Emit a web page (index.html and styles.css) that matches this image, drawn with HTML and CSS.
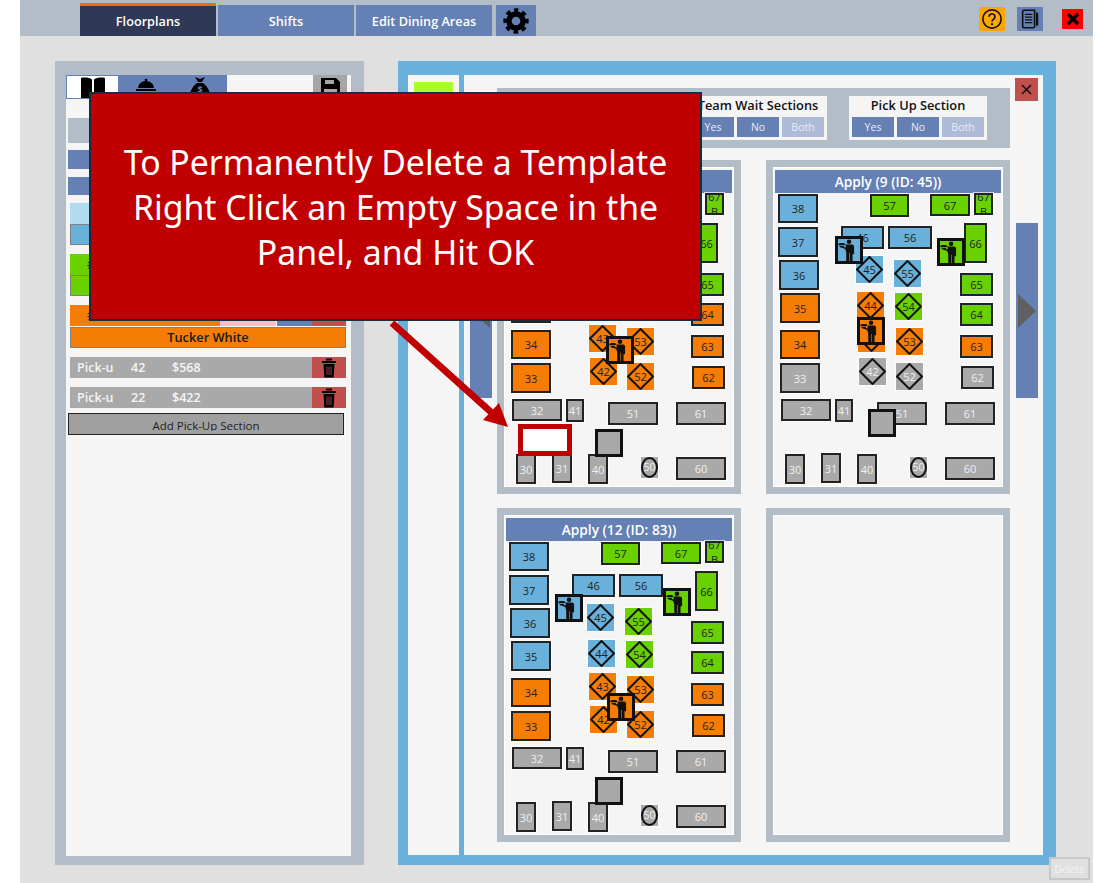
FILE: index.html
```html
<!DOCTYPE html>
<html lang="en">
<head>
    <meta charset="UTF-8">
    <meta name="viewport" content="width=device-width, initial-scale=1.0">
    <title>Floorplans</title>
    <link rel="stylesheet" href="styles.css">
</head>
<body>
    <div class="app">
        <header class="topbar">
            <button class="tab tab-active">Floorplans</button>
            <button class="tab">Shifts</button>
            <button class="tab">Edit Dining Areas</button>
            <button class="tab tab-gear">
                <svg width="26" height="26" viewBox="0 0 24 24">
                    <circle cx="12" cy="12" r="10" fill="none" stroke="#000" stroke-width="3.400" stroke-dasharray="4.200 3.654" stroke-dashoffset="2.100" transform="rotate(-90 12 12)"/>
                    <circle cx="12" cy="12" r="6.500" fill="none" stroke="#000" stroke-width="5"/>
                </svg>
            </button>
            <div class="top-actions">
                <button class="top-btn top-help">
                    <svg width="22" height="22" viewBox="0 0 24 24">
                        <circle cx="12" cy="12" r="10" fill="none" stroke="#111" stroke-width="1.800"/>
                        <path d="M8.800 9.500a3.200 3.200 0 1 1 4.900 2.700c-1.100.7-1.700 1.300-1.700 2.600" fill="none" stroke="#111" stroke-width="1.800"/>
                        <circle cx="12" cy="17.600" r="1.200" fill="#111"/>
                    </svg>
                </button>
                <button class="top-btn top-notes">
                    <svg width="22" height="22" viewBox="0 0 24 24">
                        <path d="M4 4q0-1.500 1.500-1.500H17V20q0 1.500-1.500 1.500h-10Q4 21.500 4 20z" fill="none" stroke="#111" stroke-width="1.800"/>
                        <path d="M6.500 7h8M6.500 10h8M6.500 13h8M6.500 16h8" stroke="#111" stroke-width="1.300"/>
                        <path d="M18.500 5h2l.5 1.500V18l-1.500 2.500-1-2.500z" fill="#111"/>
                    </svg>
                </button>
                <button class="top-btn top-close">
                    <svg width="14" height="14" viewBox="0 0 14 14">
                        <path d="M2 2l10 10M12 2L2 12" stroke="#000" stroke-width="3.200"/>
                    </svg>
                </button>
            </div>
        </header>

        <main class="content">
            <section class="side">
                <div class="side-inner">
                    <div class="side-tabs">
                        <button class="side-tab side-tab-on">
                            <svg width="26" height="26" viewBox="0 0 26 26">
                                <path d="M1 1c4-1 8-.5 11 1.500v22C9 23 5 23 1 24zM25 1c-4-1-8-.5-11 1.500v22c3-1.500 7-1.500 11-1z" fill="#000"/>
                            </svg>
                        </button>
                        <button class="side-tab side-tab-blue">
                            <svg width="26" height="26" viewBox="0 0 26 26">
                                <circle cx="13" cy="4" r="1.300" fill="#000"/>
                                <path d="M5 12a8 7 0 0 1 16 0zM3 13h20v2H3z" fill="#000"/>
                            </svg>
                        </button>
                        <button class="side-tab side-tab-blue">
                            <svg width="26" height="26" viewBox="0 0 26 26">
                                <path d="M8 1l5 2 5-2-3 5h-4zM10 7h6c4 3 7 8 7 12 0 3-3 5-10 5S3 22 3 19c0-4 3-9 7-12z" fill="#000"/>
                                <text x="13" y="17" class="bag-sign">$</text>
                            </svg>
                        </button>
                        <span class="side-tab-gap"></span>
                        <button class="side-tab side-tab-save">
                            <svg width="22" height="26" viewBox="0 0 22 26">
                                <path d="M2 2h15l4 4v18H2z" fill="#000"/>
                                <path d="M6 4h9v4H6zM5 13h13v9H5z" fill="#a6a6a6"/>
                            </svg>
                        </button>
                    </div>

                    <div class="bar bar-grey"></div>
                    <div class="bar bar-blue"></div>
                    <div class="bar bar-blue bar-short"></div>

                    <div class="bar bar-sky"></div>
                    <div class="bar bar-sky-name"></div>

                    <div class="bar bar-green">#</div>
                    <div class="bar bar-green-name"></div>

                    <div class="section-row">
                        <span class="section-fill">#</span>
                        <span class="section-pink"></span>
                        <span class="section-blue"></span>
                        <span class="section-del"></span>
                    </div>
                    <div class="section-name">Tucker White</div>

                    <div class="pick-row">
                        <span class="pick-name">Pick-u</span>
                        <span class="pick-num">42</span>
                        <span class="pick-amt">$568</span>
                        <span class="pick-del">
                            <svg width="16" height="20" viewBox="0 0 16 20">
                                <path d="M5 1.500h6M1 4h14" stroke="#000" stroke-width="2.200" fill="none"/>
                                <path d="M2.500 6h11l-.8 13.500H3.300z" fill="#000"/>
                                <path d="M6 8.500v8.500M8 8.500v8.500M10 8.500v8.500" stroke="#b9504a" stroke-width=".8"/>
                            </svg>
                        </span>
                    </div>
                    <div class="pick-row">
                        <span class="pick-name">Pick-u</span>
                        <span class="pick-num">22</span>
                        <span class="pick-amt">$422</span>
                        <span class="pick-del">
                            <svg width="16" height="20" viewBox="0 0 16 20">
                                <path d="M5 1.500h6M1 4h14" stroke="#000" stroke-width="2.200" fill="none"/>
                                <path d="M2.500 6h11l-.8 13.500H3.300z" fill="#000"/>
                                <path d="M6 8.500v8.500M8 8.500v8.500M10 8.500v8.500" stroke="#b9504a" stroke-width=".8"/>
                            </svg>
                        </span>
                    </div>
                    <button class="add-pick"><span class="add-label">Add Pick-Up Section</span></button>
                </div>
            </section>

            <section class="board">
                <div class="board-strip"><span class="strip-swatch"></span></div>
                <div class="board-main">
                    <div class="side-col">
                        <button class="page-btn page-prev"><span class="tri tri-left"></span></button>
                    </div>
                    <div class="center-col">
                        <div class="filters">
                            <div class="filter">
                                <div class="filter-title">Team Wait Sections</div>
                                <div class="filter-btns">
                                    <button class="fbtn">Yes</button>
                                    <button class="fbtn">No</button>
                                    <button class="fbtn fbtn-off">Both</button>
                                </div>
                            </div>
                            <div class="filter">
                                <div class="filter-title">Pick Up Section</div>
                                <div class="filter-btns">
                                    <button class="fbtn">Yes</button>
                                    <button class="fbtn">No</button>
                                    <button class="fbtn fbtn-off">Both</button>
                                </div>
                            </div>
                        </div>
                        <div class="templates">
                            <div class="card"><div class="map" id="map1"></div></div>
                            <div class="card"><div class="map" id="map2"></div></div>
                            <div class="card"><div class="map" id="map3"></div></div>
                            <div class="card"><div class="map"></div></div>
                        </div>
                    </div>
                    <div class="side-col">
                        <button class="board-close">
                            <svg width="11" height="11" viewBox="0 0 11 11">
                                <path d="M1 1l9 9M10 1l-9 9" stroke="#111" stroke-width="1.500"/>
                            </svg>
                        </button>
                        <button class="page-btn page-next"><span class="tri tri-right"></span></button>
                    </div>
                </div>
            </section>
        </main>

        <button class="delete-btn">Delete</button>

        <!-- tutorial overlay -->
        <div class="callout">To Permanently Delete a Template<br>Right Click an Empty Space in the<br>Panel, and Hit OK</div>
        <svg class="callout-arrow" width="140" height="120" viewBox="0 0 140 120">
            <path d="M3 3L103 93" stroke="#c00000" stroke-width="7"/>
            <path d="M119 107L110 83 94 100z" fill="#c00000"/>
        </svg>
        <div class="callout-mark"></div>
    </div>
    <script src="script.js"></script>
</body>
</html>
```

FILE: styles.css
```css
* {
    box-sizing: border-box;
}

body {
    margin: 0;
    background-color: #fff;
    font-family: "Open Sans", "Liberation Sans", sans-serif;
}

button {
    font-family: inherit;
    border: none;
    padding: 0;
}

.app {
    position: relative;
    width: 1073px;
    height: 883px;
    margin-left: 20px;
    background-color: #e0e0e0;
    overflow: hidden;
}

/* top bar */
.topbar {
    display: flex;
    align-items: flex-end;
    height: 36px;
    padding-left: 60px;
    background-color: #b3bdc8;
}

.tab {
    width: 136px;
    height: 31px;
    margin-right: 2px;
    background-color: #6480b4;
    color: #fff;
    font-size: 12.700px;
    font-weight: 600;
}

.tab-active {
    height: 33px;
    background-color: #2f3854;
    border-top: 3px solid #f06a10;
}

.tab-gear {
    display: flex;
    align-items: center;
    justify-content: center;
    width: 40px;
    margin-left: 2px;
}

.top-actions {
    display: flex;
    align-items: center;
    align-self: stretch;
    margin-left: auto;
    padding-right: 10px;
    padding-top: 2px;
}

.top-btn {
    display: flex;
    align-items: center;
    justify-content: center;
    width: 26px;
    height: 24px;
}

.top-help {
    background-color: #ffa500;
}

.top-notes {
    margin-left: 12px;
    background-color: #6480b4;
}

.top-close {
    width: 21px;
    height: 20px;
    margin-left: 19px;
    background-color: #f00;
}

.content {
    display: flex;
    align-items: flex-start;
    padding: 25px 0 0 35px;
}

/* left panel */
.side {
    width: 309px;
    height: 804px;
    border: solid #b3bdc8;
    border-width: 14px 13px 9px 11px;
}

.side-inner {
    height: 100%;
    background-color: #f5f5f5;
    overflow: hidden;
}

.side-tabs {
    display: flex;
    height: 24px;
}

.side-tab {
    display: flex;
    align-items: flex-start;
    justify-content: center;
    width: 53px;
    height: 24px;
    padding-top: 1px;
    overflow: hidden;
}

.side-tab-on {
    background-color: #fff;
    border: 1px solid #6480b4;
}

.side-tab-blue {
    background-color: #6480b4;
    width: 54px;
}

.side-tab-gap {
    width: 86px;
}

.side-tab-save {
    width: 34px;
    background-color: #a6a6a6;
}

.bag-sign {
    fill: #6480b4;
    font-size: 9px;
    font-weight: 700;
    text-anchor: middle;
}

.bar {
    margin-left: 2px;
    width: 278px;
}

.bar-grey {
    height: 25px;
    margin-top: 19px;
    background-color: #b3bdc8;
}

.bar-blue {
    height: 19px;
    margin-top: 7px;
    background-color: #6480b4;
}

.bar-short {
    height: 18px;
    margin-top: 8px;
}

.bar-sky {
    height: 21px;
    margin-top: 8px;
    margin-left: 4px;
    width: 276px;
    background-color: #b3dbee;
}

.bar-sky-name {
    height: 21px;
    margin-left: 4px;
    width: 276px;
    background-color: #69b1da;
    border: 1px solid #808080;
}

.bar-green {
    height: 21px;
    margin-top: 9px;
    margin-left: 4px;
    padding-left: 17px;
    width: 276px;
    background-color: #69d100;
    color: #222;
    font-size: 12px;
    line-height: 21px;
}

.bar-green-name {
    height: 21px;
    margin-left: 4px;
    width: 276px;
    background-color: #69d100;
    border: 1px solid #808080;
}

.section-row {
    display: flex;
    height: 21px;
    margin: 9px 0 0 4px;
    width: 276px;
}

.section-fill {
    flex: 1;
    padding-left: 17px;
    background-color: #f57c05;
    color: #222;
    font-size: 12px;
    line-height: 21px;
}

.section-pink {
    width: 56px;
    background-color: #f8bfc8;
}

.section-blue {
    width: 35px;
    margin-left: 1px;
    background-color: #6480b4;
}

.section-del {
    width: 34px;
    background-color: #c0504d;
}

.section-name {
    width: 276px;
    height: 21px;
    margin: 1px 0 0 4px;
    background-color: #f57c05;
    border: 1px solid #808080;
    color: #1a1a1a;
    font-size: 12.800px;
    font-weight: 600;
    line-height: 19px;
    text-align: center;
}

.pick-row {
    display: flex;
    align-items: center;
    width: 276px;
    height: 21px;
    margin: 9px 0 0 4px;
    background-color: #a9a9a9;
    color: #f5f5f5;
    font-size: 12.500px;
    font-weight: 600;
}

.pick-name {
    width: 61px;
    padding-left: 7px;
}

.pick-num {
    width: 41px;
}

.pick-amt {
    flex: 1;
}

.pick-del {
    display: flex;
    align-items: center;
    justify-content: center;
    width: 34px;
    height: 100%;
    background-color: #c0504d;
}

.add-pick {
    display: flex;
    align-items: flex-start;
    justify-content: center;
    width: 276px;
    height: 22px;
    margin: 5px 0 0 2px;
    padding-top: 4px;
    background-color: #a0a0a0;
    border: 1px solid #222;
    color: #222;
    font-size: 11.500px;
}

.add-label {
    display: block;
    height: 13px;
    line-height: 16px;
    overflow: hidden;
}

/* right panel */
.board {
    display: flex;
    width: 658px;
    height: 804px;
    margin-left: 34px;
    background-color: #69b1da;
    padding: 14px 13px 10px 10px;
}

.board-strip {
    width: 51px;
    margin-right: 5px;
    background-color: #f5f5f5;
}

.strip-swatch {
    display: block;
    width: 39px;
    height: 40px;
    margin: 7px 0 0 6px;
    background-color: #a6ff2a;
}

.board-main {
    display: flex;
    flex: 1;
    background-color: #f5f5f5;
}

.side-col {
    width: 33px;
    flex-shrink: 0;
}

.center-col {
    width: 513px;
}

.page-btn {
    display: flex;
    align-items: center;
    justify-content: center;
    width: 22px;
    height: 175px;
    background-color: #6480b4;
}

.page-prev {
    margin: 148px 0 0 6px;
}

.page-next {
    margin: 122px 0 0 6px;
}

.tri {
    width: 0;
    height: 0;
    border-style: solid;
    border-color: transparent;
}

.tri-left {
    border-width: 17px 18px 17px 0;
    border-right-color: #606060;
}

.tri-right {
    border-width: 17px 0 17px 18px;
    border-left-color: #606060;
}

.board-close {
    display: flex;
    align-items: center;
    justify-content: center;
    width: 23px;
    height: 23px;
    margin: 3px 0 0 5px;
    background-color: #c0504d;
}

.filters {
    display: flex;
    justify-content: flex-end;
    gap: 22px;
    height: 60px;
    margin-top: 13px;
    padding: 8px 23px 0 0;
    background-color: #b3bdc8;
}

.filter {
    width: 138px;
    height: 44px;
    padding: 0 3px;
    background-color: #f5f5f5;
}

.filter-title {
    height: 21px;
    color: #111;
    font-size: 12.800px;
    font-weight: 600;
    line-height: 19px;
    text-align: center;
    white-space: nowrap;
}

.filter-btns {
    display: flex;
    gap: 3px;
}

.fbtn {
    width: 42px;
    height: 20px;
    background-color: #6480b4;
    color: #e8edf5;
    font-size: 10.500px;
}

.fbtn-off {
    background-color: #adbbd8;
}

/* floorplan cards */
.templates {
    display: grid;
    grid-template-columns: 244px 244px;
    grid-template-rows: 334px 334px;
    gap: 14px 25px;
    margin-top: 12px;
}

.card {
    border: 8px solid #b3bdc8;
}

.map {
    position: relative;
    height: 100%;
    background-color: #f5f5f5;
    outline: 1px solid #fff;
    overflow: hidden;
}

.map-head {
    height: 23px;
    margin: 2px 1px 0;
    background-color: #6480b4;
    color: #fff;
    font-size: 13.700px;
    font-weight: 600;
    line-height: 23px;
    text-align: center;
}

.tbl {
    position: absolute;
    display: flex;
    align-items: center;
    justify-content: center;
    border: 2px solid #222;
    outline: 1px solid rgba(255, 255, 255, 0.7);
    color: #222;
    font-size: 11px;
    line-height: 15px;
    text-align: center;
    overflow: hidden;
}

.blue {
    background-color: #69b1da;
}

.green {
    background-color: #69d100;
}

.orange {
    background-color: #f57c05;
}

.grey {
    background-color: #a9a9a9;
    color: #f0f0f0;
}

.diamond {
    width: 27px;
    height: 27px;
    border: none;
}

.round {
    border: none;
    font-size: 10.500px;
}

.tbl-shape {
    position: absolute;
    left: 0;
    top: 0;
}

.waiter {
    position: absolute;
    display: flex;
    align-items: center;
    justify-content: center;
    width: 28px;
    height: 28px;
    border: 3px solid #111;
}

.callout {
    position: absolute;
    left: 69px;
    top: 92px;
    display: flex;
    align-items: center;
    justify-content: center;
    width: 613px;
    height: 229px;
    padding-top: 2px;
    background-color: #c00000;
    border: 2px solid #14303f;
    color: #fff;
    font-family: "Noto Sans", sans-serif;
    font-size: 33.800px;
    line-height: 45px;
    text-align: center;
    white-space: nowrap;
}

.callout-arrow {
    position: absolute;
    left: 369px;
    top: 320px;
}

.callout-mark {
    position: absolute;
    left: 498px;
    top: 424px;
    width: 54px;
    height: 32px;
    background-color: #fff;
    border: 5px solid #c00000;
}

.delete-btn {
    position: absolute;
    left: 1029px;
    top: 857px;
    width: 41px;
    height: 23px;
    background-color: #e0e0e0;
    border: 2px solid #c8c8c8;
    color: #f4f4f4;
    font-size: 10px;
}
```

FILE: script.js
```js
// one floor, same tables on every template: label, x, y, w, h
var rects = [
    ['38', 4, 26, 40, 29], ['37', 4, 59, 40, 30], ['36', 5, 92, 40, 30], ['35', 6, 125, 40, 30],
    ['34', 6, 162, 40, 29], ['33', 6, 195, 40, 30], ['57', 96, 26, 39, 23], ['67', 156, 26, 40, 22],
    ['67 B', 200, 25, 19, 22], ['46', 67, 58, 43, 23], ['56', 114, 58, 44, 23], ['66', 190, 55, 23, 40],
    ['65', 186, 105, 33, 23], ['64', 186, 135, 33, 23], ['63', 186, 167, 33, 23], ['62', 187, 198, 33, 23],
    ['32', 7, 231, 50, 22], ['41', 61, 231, 18, 23], ['51', 103, 234, 50, 23], ['61', 171, 234, 50, 23],
    ['30', 11, 286, 20, 30], ['31', 47, 285, 20, 30], ['40', 83, 286, 20, 30], ['60', 171, 289, 50, 23]
];

var diamonds = [
    ['45', 82, 88], ['55', 120, 92], ['44', 83, 124], ['54', 121, 125],
    ['43', 84, 157], ['53', 122, 160], ['42', 85, 190], ['52', 122, 195]
];

var templates = [
    {
        id: 'map1',
        title: 'Apply (10 (ID: 61))',
        blue: ['38', '37', '36', '35', '46', '56', '45', '44'],
        green: ['57', '67', '67 B', '66', '65', '55', '54'],
        orange: ['34', '33', '43', '53', '42', '52', '64', '63', '62'],
        waiters: [[50, 78, 'blue'], [158, 72, 'green'], [101, 168, 'orange']],
        square: [90, 261]
    },
    {
        id: 'map2',
        title: 'Apply (9 (ID: 45))',
        blue: ['38', '37', '36', '46', '56', '45', '55'],
        green: ['57', '67', '67 B', '66', '65', '64', '54'],
        orange: ['35', '34', '44', '43', '53', '63'],
        waiters: [[61, 68, 'blue'], [163, 70, 'green'], [83, 149, 'orange']],
        square: [94, 241]
    },
    {
        id: 'map3',
        title: 'Apply (12 (ID: 83))',
        blue: ['38', '37', '36', '35', '46', '56', '45', '44'],
        green: ['57', '67', '67 B', '66', '65', '64', '55', '54'],
        orange: ['34', '33', '43', '53', '42', '52', '63', '62'],
        waiters: [[50, 78, 'blue'], [158, 72, 'green'], [102, 177, 'orange']],
        square: [90, 261]
    }
];

var waiterIcon =
    '<svg width="22" height="22" viewBox="0 0 23 23">' +
    '<circle cx="11.500" cy="2.800" r="2.400" fill="#111"/>' +
    '<path d="M8 5.800h7l1.800 1.200v9h-1.600v7h-3v-8.500h-.6V23h-3v-9.500L7.500 10.500 3.500 9l.5-1.300 4 1.200z" fill="#111"/>' +
    '<path d="M0 5.800c0-1.800 7-2.200 8 0 0 .8-8 .8-8 0zM1 7h5.500l-1 2h-3z" fill="#111"/>' +
    '</svg>';

var diamondShape =
    '<svg class="tbl-shape" width="27" height="27" viewBox="0 0 27 27">' +
    '<polygon points="13.500,1 26,13.500 13.500,26 1,13.500" fill="none" stroke="#111" stroke-width="2"/>' +
    '</svg>';

var roundShape =
    '<svg class="tbl-shape" width="17" height="21" viewBox="0 0 17 21">' +
    '<ellipse cx="8.500" cy="10.500" rx="7.500" ry="9.500" fill="none" stroke="#111" stroke-width="2"/>' +
    '</svg>';

function colorOf(t, label) {
    if (t.blue.indexOf(label) >= 0) return 'blue';
    if (t.green.indexOf(label) >= 0) return 'green';
    if (t.orange.indexOf(label) >= 0) return 'orange';
    return 'grey';
}

function addBox(map, cls, x, y, w, h, html) {
    var el = document.createElement('div');
    el.className = cls;
    el.style.left = x + 'px';
    el.style.top = y + 'px';
    if (w) {
        el.style.width = w + 'px';
        el.style.height = h + 'px';
    }
    el.innerHTML = html || '';
    map.appendChild(el);
}

templates.forEach(function (t) {
    var map = document.getElementById(t.id);

    var head = document.createElement('div');
    head.className = 'map-head';
    head.textContent = t.title;
    map.appendChild(head);

    rects.forEach(function (r) {
        addBox(map, 'tbl ' + colorOf(t, r[0]), r[1], r[2], r[3], r[4], r[0]);
    });
    diamonds.forEach(function (d) {
        addBox(map, 'tbl diamond ' + colorOf(t, d[0]), d[1], d[2], 0, 0, diamondShape + d[0]);
    });
    addBox(map, 'tbl round grey', 136, 289, 17, 21, roundShape + '50');

    t.waiters.forEach(function (w) {
        addBox(map, 'waiter ' + w[2], w[0], w[1], 0, 0, waiterIcon);
    });
    addBox(map, 'waiter grey', t.square[0], t.square[1]);
});
```
